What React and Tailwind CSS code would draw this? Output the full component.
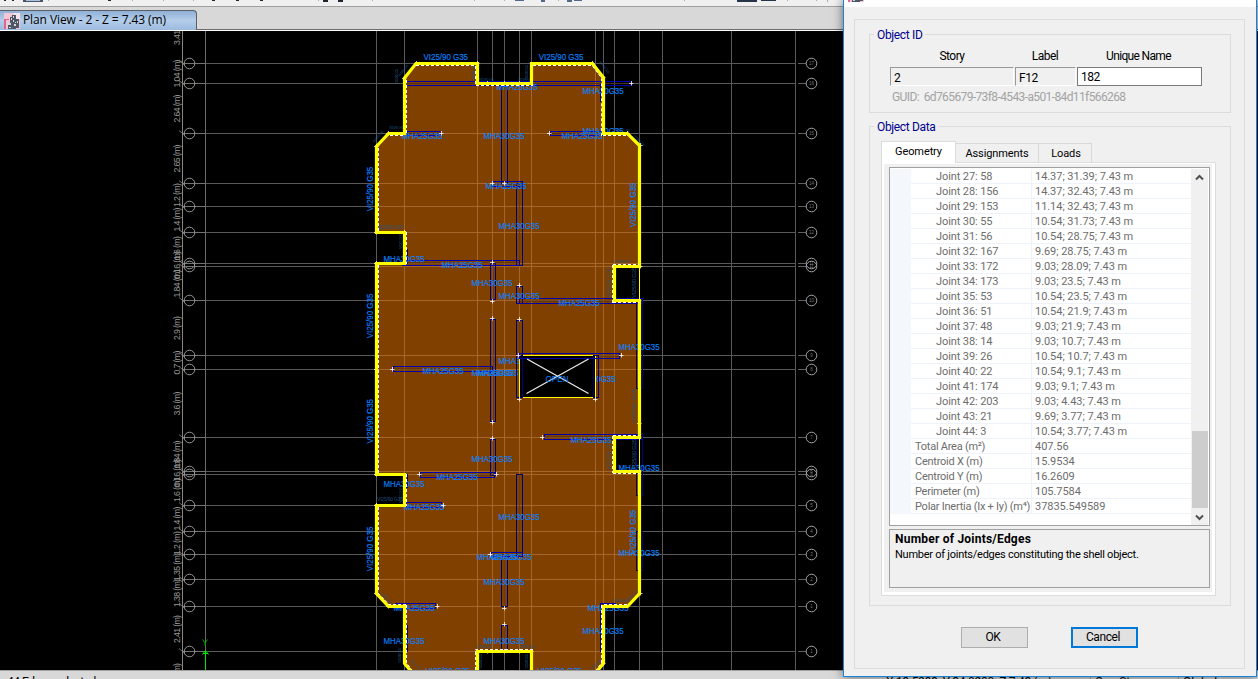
import React from "react";

const rowsY = [63.5, 83.5, 133.5, 183.5, 206.5, 232.5, 263.5, 266.5, 300.5, 355.5, 369.5, 437.5, 471.5, 474.5, 505.5, 531.5, 554.5, 579.5, 606.5, 651.5];
const rowNames = [17, 16, 15, 14, 13, 12, 11, 11, 10, 9, 8, 7, 6, 6, 5, 4, 3, 2, 1, 1];
const colsX = [376.5, 404.5, 477.5, 492.5, 504.5, 519.5, 531.5, 595.5, 603.5, 614.5, 639.5, 662.5, 731.5, 795.5];
const dims = ["1.04", "2.64", "2.65", "1.2", "1.4", "1.6", "0.16", "1.84", "2.9", "0.7", "3.6", "1.84", "0.16", "1.6", "1.4", "1.2", "1.35", "1.38", "2.41"];

const slab =
  "M404.5 78L416 63.5H477.5V83.5H531.5V63.5H592.5L603.5 77.5V133.5H627.5L639.5 145.5V266.5H614.5V300.5H639.5V437.5H614.5V471.5H639.5V593.5L627.5 606.5H603.5V663.5L592 677.5H531.5V651.5H477.5V677.5H416L404.5 663.5V606.5H388.5L376.5 593.5V505.5H404.5V474.5H376.5V263.5H404.5V232.5H376.5V146.5L388.5 133.5H404.5Z";

const dashes =
  "M406.5 80V134M378.5 148V231M416 65.5H476M475.5 66V86M476 85.5H533M533 65.5H592L601.5 78V136M390 135.5H405M603 135.5H627M406.5 232V264M378.5 265V473M406.5 474V506M378.5 507V592M613 264.5H639M612.5 265V303M613 302.5H639M613 435.5H639M612.5 436V473M613 473.5H639M378 593L389 604.5H406M406.5 605V663L412 670M604 604.5H627M601.5 605V663L596 670M475.5 670V649.5H533";

const walls = [
  [404, 81.5, 227, 4], [407, 131.5, 33, 4], [550.5, 131.5, 52, 4], [492.5, 181.5, 30, 5], [402.5, 260.5, 117, 5],
  [519.5, 298.5, 123, 5], [519.5, 353.5, 100, 5], [393.5, 366.5, 99, 5], [544.5, 434.5, 98, 5], [420.5, 472.5, 74, 5],
  [406.5, 502.5, 35, 5], [491.5, 552.5, 31, 4], [395.5, 603.5, 40, 5], [600.5, 603.5, 15, 3],
];
const piers = [
  [501.5, 86.5, 6, 97], [516.5, 183.5, 6, 82], [490.5, 263.5, 5, 36], [516.5, 286.5, 6, 17], [636.5, 298.5, 6, 90],
  [490.5, 319.5, 5, 102], [516.5, 320.5, 6, 77], [593.5, 355.5, 5, 42], [636.5, 434.5, 6, 61], [490.5, 439.5, 5, 36],
  [516.5, 474.5, 6, 82], [501.5, 556.5, 6, 50], [501.5, 625.5, 6, 25], [600.5, 603.5, 5, 48], [636.5, 531.5, 6, 39],
  [403.5, 625.5, 4, 26], [403.5, 249.5, 4, 14], [403.5, 474.5, 4, 13], [600.5, 83.5, 5, 18],
];
const A = "MHA30G35";
const B = "MHA25G35";
const tags = [
  [582.5, 93.8, A], [496.5, 89.5, B], [401.5, 139.3, B], [483.5, 139.3, A], [561.5, 139.3, B], [582.5, 133.5, A], [485.5, 189.3, B],
  [498.5, 229.3, A], [383.5, 262, A], [441.5, 268, B], [471.5, 286, A], [498.5, 299, A], [558.5, 306, B], [618.5, 350, A], [498.5, 364, A],
  [422.5, 374, B], [471.5, 376.3, B], [477.5, 376.3, A], [574.5, 382, A], [570.5, 442.5, B], [471.5, 462.3, A], [436.5, 480, B],
  [383.5, 487, A], [403.5, 510.3, B], [498.5, 520, A], [618.5, 471.3, A], [476.5, 560.3, B], [490.5, 560.3, B], [618.5, 556, A],
  [483.5, 585.3, A], [393.5, 611, B], [587.5, 611, B], [582.5, 634, A], [383.5, 644, A], [483.5, 644, A],
];
const beams = [[423.5, 60.3], [538.8, 60.3], [425.5, 674], [537.5, 674]];
const beamsV = [[373.3, 211.3], [373.3, 338.2], [373.3, 443.5], [373.3, 571.2], [636.3, 227.3], [636.3, 554.3]];
const tiny = [
  [399, 77, -50], [398, 84, -90], [374, 143, -50], [389, 129, 0], [599, 62, 52], [633, 136, 45], [615, 132, 0], [475, 80, -90], [527.5, 80, -90],
  [479, 80.5, 0], [518, 80.5, 0], [615, 263.2, 0], [380, 593, 45], [628, 602, -50], [477, 647.5, 0],
  [520, 647.5, 0], [482, 669, -90], [527.5, 669, -90], [401, 663, -90], [410, 660, 48], [592, 670, -45], [614, 602, 0],
];
const ticks = [
  [376, 146], [388, 133], [404, 78], [416, 63], [477, 63], [592, 63], [603, 77], [627, 133], [640, 145], [487, 83], [504, 83], [519, 83], [441, 133],
  [549, 133], [631, 83], [492, 183], [504, 183], [376, 232], [376, 263], [404, 232], [640, 266], [492, 262], [492, 301], [519, 285], [492, 318],
  [519, 319], [376, 369], [392, 369], [621, 355], [518, 355], [492, 422], [519, 399], [595, 399], [492, 438], [542, 437], [639, 423], [376, 474],
  [376, 505], [419, 474], [496, 474], [443, 505], [490, 554], [504, 608], [504, 624], [437, 606], [376, 593], [388, 606], [640, 593], [603, 663],
  [487, 651], [504, 651], [519, 651], [477, 651], [531, 651],
];

function GridLines() {
  return (
    <g>
      {rowsY.map((y) => <path key={"r" + y} d={`M205 ${y}H796`} />)}
      {colsX.map((x) => <path key={"c" + x} d={`M${x} 31V670`} />)}
    </g>
  );
}

function PlanDrawing() {
  return (
    <svg width="843" height="639" viewBox="0 31 843 639" className="block bg-black" fontFamily="'Liberation Sans', sans-serif">
      <defs>
        <clipPath id="slab"><path d={slab} /></clipPath>
      </defs>
      <g stroke="#595959"><GridLines /></g>
      <path d={slab} fill="#804000" />
      <g clipPath="url(#slab)" stroke="#a4662b"><GridLines /></g>

      <g stroke="#858585" fill="none">
        <path d="M182.5 31V670" />
        <path d="M205.5 31V670" stroke="#6a6a6a" />
        {rowsY.map((y, i) => (
          <g key={y}>
            <path d={`M182 ${y}H205`} stroke="#737373" />
            <path d={`M179 ${y - 3}L185 ${y + 2}`} strokeWidth=".8" />
            <circle cx="189.5" cy={y} r="5.3" stroke="#979797" />
            <path d={`M798 ${y}H806`} stroke="#606060" />
            <circle cx="811.5" cy={y} r="5.3" stroke="#a5a5a5" />
            <text x="811.5" y={y + 1.6} fontSize="4.5" textAnchor="middle" fill="#777" stroke="none">{rowNames[i]}</text>
          </g>
        ))}
      </g>
      <g fill="#989898" fontSize="8.8" textAnchor="middle">
        <text transform="translate(180.3 31) rotate(-90)" textLength="28">3.41 (m)</text>
        {dims.map((d, i) => (
          <text key={i} transform={`translate(180.3 ${(rowsY[i] + rowsY[i + 1]) / 2}) rotate(-90)`} textLength={d.length > 3 ? 28 : 24}>{d + " (m)"}</text>
        ))}
        <text transform="translate(180.3 677) rotate(-90)" textLength="28">2.86 (m)</text>
      </g>

      <g fill="none">
        {piers.map(([x, y, w, h], i) => (
          <g key={i}>
            <rect x={x} y={y} width={w} height={h} stroke="#000078" />
            <path d={`M${x + w / 2} ${y}V${y + h}`} stroke="#4a2a14" strokeWidth=".7" />
          </g>
        ))}
        {walls.map(([x, y, w, h], i) => (
          <g key={i}>
            <path d={`M${x} ${y + h / 2}H${x + w}`} stroke="#4a2a14" strokeWidth=".9" />
            <rect x={x} y={y} width={w} height={h} stroke="#0000a8" />
          </g>
        ))}
      </g>

      <g fill="#0a80fa" stroke="#0a80fa" strokeWidth=".15" fontSize="8.4">
        {tags.map(([x, y, t], i) => <text key={i} x={x} y={y} textLength="41" lengthAdjust="spacingAndGlyphs">{t}</text>)}
        {beams.map(([x, y], i) => <text key={i} x={x} y={y} textLength="44.5" lengthAdjust="spacingAndGlyphs">VI25/90 G35</text>)}
        {beamsV.map(([x, y], i) => <text key={i} transform={`translate(${x} ${y}) rotate(-90)`} textLength="44.5" lengthAdjust="spacingAndGlyphs">VI25/90 G35</text>)}
      </g>
      <g fill="#1f5a94" opacity=".85">
        {tiny.map(([x, y, r], i) => <text key={i} transform={`translate(${x} ${y}) rotate(${r})`} fontSize="3.2" textLength="15">VI25/90 G35</text>)}
        <text x="378" y="229" fontSize="5" textLength="25">VI25/90 G35</text>
        <text x="377" y="501" fontSize="5" textLength="26">VI25/90 G35</text>
        <text transform="translate(401.5 249) rotate(-90)" fontSize="4" textLength="15">VI25/90</text>
        <text transform="translate(401.5 503) rotate(-90)" fontSize="4" textLength="15">VI25/90</text>
        <text transform="translate(635.5 298) rotate(-90)" fontSize="6" textLength="31">VI25/90 G35</text>
        <text transform="translate(635.5 470) rotate(-90)" fontSize="6" textLength="31">VI25/90 G35</text>
        <text transform="translate(635.5 423) rotate(-90)" fontSize="6" textLength="34">VI25/90 G35</text>
        <text transform="translate(610.5 298) rotate(-90)" fontSize="5" textLength="31">VI25/180 G35</text>
        <text transform="translate(610.5 470) rotate(-90)" fontSize="5" textLength="31">VI25/180 G35</text>
      </g>

      <rect x="519.5" y="355.5" width="76" height="42" fill="#000" stroke="#ffff00" />
      <g fill="none" stroke="#000078">
        <rect x="516.5" y="355.5" width="6" height="42" />
        <rect x="593.5" y="355.5" width="5" height="42" />
        <rect x="519.5" y="353.5" width="100" height="5" stroke="#0000a8" />
      </g>
      <path d="M527 359L588.5 393.5M526.5 393.5L588.5 359" stroke="#e6e6e6" strokeWidth="1.4" />
      <text x="545.5" y="382" fontSize="8.4" textLength="23" lengthAdjust="spacingAndGlyphs" fill="#0a80fa">OPEN</text>

      <g stroke="#fff" strokeWidth=".8">
        {ticks.map(([x, y], i) => <path key={i} d={`M${x - 2} ${y + 0.5}h4.500M${x + 0.5} ${y - 2}v4.500`} />)}
      </g>
      <path d={slab} fill="none" stroke="#ffff00" strokeWidth="3.2" />
      <path d="M639.5 266V300M639.5 437V471" stroke="#ffff00" />
      <path d={dashes} fill="none" stroke="#fff" strokeDasharray="3 2" />

      <path d="M205.5 651V670M202.5 654.5L205.5 650.5L208.5 654.5M203 653.5H208" stroke="#00e800" fill="none" />
      <path d="M202.5 639.5L205 643L207.500 639.5M205 643V646" stroke="#00a000" fill="none" />
    </svg>
  );
}

function AppIcon() {
  return (
    <svg width="16" height="16" viewBox="0 0 16 16">
      <rect width="16" height="16" fill="#f3c6d6" />
      <path d="M9 0h7v6h-4z" fill="#f6e4ec" />
      <path d="M0 6h5v1H2v9H0z" fill="#e0648c" />
      <path d="M6 4h3v12H6zM8 2h4v12H8zM12 6h3v9h-3zM4 12h8v4H4z" fill="#4f5767" />
      <path d="M7 5h1v2H7zM9 3h1v2H9zM9 7h1v2H9zM13 8h1v2h-1zM6 10h1v2H6zM10 11h2v2h-2zM3 8h2v4H3zM5 14h2v1H5zM11 9h1v1h-1z" fill="#cfd6e2" />
    </svg>
  );
}

const joints = [
  ["Joint 27: 58", "14.37; 31.39; 7.43 m"], ["Joint 28: 156", "14.37; 32.43; 7.43 m"], ["Joint 29: 153", "11.14; 32.43; 7.43 m"],
  ["Joint 30: 55", "10.54; 31.73; 7.43 m"], ["Joint 31: 56", "10.54; 28.75; 7.43 m"], ["Joint 32: 167", "9.69; 28.75; 7.43 m"],
  ["Joint 33: 172", "9.03; 28.09; 7.43 m"], ["Joint 34: 173", "9.03; 23.5; 7.43 m"], ["Joint 35: 53", "10.54; 23.5; 7.43 m"],
  ["Joint 36: 51", "10.54; 21.9; 7.43 m"], ["Joint 37: 48", "9.03; 21.9; 7.43 m"], ["Joint 38: 14", "9.03; 10.7; 7.43 m"],
  ["Joint 39: 26", "10.54; 10.7; 7.43 m"], ["Joint 40: 22", "10.54; 9.1; 7.43 m"], ["Joint 41: 174", "9.03; 9.1; 7.43 m"],
  ["Joint 42: 203", "9.03; 4.43; 7.43 m"], ["Joint 43: 21", "9.69; 3.77; 7.43 m"], ["Joint 44: 3", "10.54; 3.77; 7.43 m"],
];
const totals = [
  ["Total Area (m²)", "407.56"], ["Centroid X (m)", "15.9534"], ["Centroid Y (m)", "16.2609"], ["Perimeter (m)", "105.7584"],
  ["Polar Inertia (Ix + Iy) (m⁴)", "37835.549589"],
];

function Row({ name, value, indent }) {
  return (
    <div className="flex h-[15px] shrink-0 leading-[16px]">
      <div className={"w-[121px] border-b border-r border-[#eef2fa] " + (indent ? "pl-[25px] tracking-[-0.1px]" : "pl-[4px] tracking-[-0.25px]")}>{name}</div>
      <div className="flex-1 border-b border-[#eef2fa] pl-[3px] tracking-[-0.05px]">{value}</div>
    </div>
  );
}

function Group({ title, className, children }) {
  return (
    <div className={"relative border border-[#dcdcdc] " + className}>
      <span className="absolute -top-[8px] left-[4px] bg-[#f0f0f0] px-[3px] text-[12px] leading-[16px] tracking-[-0.35px] text-[#00008b]">{title}</span>
      {children}
    </div>
  );
}

function Dialog() {
  return (
    <div className="absolute left-[843px] top-0 flex h-[677px] w-[414px] flex-col border-x border-b border-[#1883d7] bg-[#f0f0f0] text-[12px] text-black shadow-[0_0_10px_rgba(0,0,0,0.55)]">
      <div className="h-[7px] shrink-0 overflow-hidden bg-white pl-[4px]"><div className="-mt-[14px]"><AppIcon /></div></div>
      <div className="mx-[10px] mt-[12px] flex h-[650px] w-[391px] flex-col border border-[#dcdcdc] px-[14px] pt-[14px]">
        <Group title="Object ID" className="h-[79px] w-[362px] shrink-0 pl-[20px] pt-[13px]">
          <div className="flex h-[16px] text-center leading-[16px] tracking-[-0.5px]">
            <div className="w-[124px]">Story</div>
            <div className="w-[62px]">Label</div>
            <div className="w-[125px] tracking-[-0.65px]">Unique Name</div>
          </div>
          <div className="mt-[3px] flex h-[19px] gap-px leading-[20px] tracking-[-0.5px]">
            <div className="w-[124px] border border-b-white border-r-white border-l-[#999] border-t-[#999] pl-[3px]">2</div>
            <div className="w-[61px] border border-b-white border-r-white border-l-[#999] border-t-[#999] pl-[3px]">F12</div>
            <div className="w-[125px] border border-[#7a7a7a] bg-white pl-[3px] leading-[18px]">182</div>
          </div>
          <div className="mt-[3px] whitespace-nowrap pl-[2px] leading-[16px] tracking-[-0.61px] text-[#a3a3a3]">GUID:&nbsp; 6d765679-73f8-4543-a501-84d11f566268</div>
        </Group>
        <Group title="Object Data" className="mt-[13px] h-[480px] w-[362px] shrink-0 pl-[11px] pt-[14px]">
          <div className="flex h-[21px] items-end text-[11px]">
            <div className="-mb-px h-[22px] w-[75px] border border-b-0 border-[#dcdcdc] bg-white text-center leading-[20px] tracking-[-0.1px]">Geometry</div>
            <div className="h-[19px] w-[83px] border border-b-0 border-l-0 border-[#d9d9d9] text-center leading-[20px] tracking-[-0.1px]">Assignments</div>
            <div className="h-[19px] w-[53px] border border-b-0 border-l-0 border-[#d9d9d9] pl-[2px] text-center leading-[20px] tracking-[-0.1px]">Loads</div>
          </div>
          <div className="h-[434px] w-[335px] border border-[#dcdcdc] bg-white p-[2px] pt-px">
            <div className="h-[428px] w-[328px] bg-[#f0f0f0] pl-[5px] pt-[3px]">
              <div className="flex h-[359px] w-[321px] border border-[#a0a0a0] bg-white pr-px pt-px text-[11px] text-[#6d6d6d]">
                <div className="h-[345px] w-[21px] bg-[#f4f7fc]" />
                <div className="flex flex-1 flex-col whitespace-nowrap">
                  {joints.map(([n, v]) => <Row key={n} name={n} value={v} indent />)}
                  {totals.map(([n, v]) => <Row key={n} name={n} value={v} />)}
                </div>
                <div className="flex h-[356px] w-[17px] flex-col items-center bg-[#f0f0f0]">
                  <svg width="9" height="7" viewBox="0 0 9 7" className="mt-[5px]"><path d="M1 5.500L4.500 2L8 5.500" fill="none" stroke="#505050" strokeWidth="2" /></svg>
                  <div className="mt-[250px] h-[77px] w-[16px] bg-[#cdcdcd]" />
                  <svg width="9" height="7" viewBox="0 0 9 7" className="mt-[6px]"><path d="M1 1.500L4.500 5L8 1.500" fill="none" stroke="#505050" strokeWidth="2" /></svg>
                </div>
              </div>
              <div className="mt-[3px] h-[59px] w-[321px] border border-[#a0a0a0] pl-[5px] pt-[2px]">
                <div className="text-[12px] font-bold leading-[15px] tracking-[0.22px]">Number of Joints/Edges</div>
                <div className="whitespace-nowrap text-[11px] leading-[15px] tracking-[-0.25px]">Number of joints/edges constituting the shell object.</div>
              </div>
            </div>
          </div>
        </Group>
        <div className="ml-[92px] mt-[21px] flex gap-[43px] tracking-[-0.4px]">
          <button className="h-[21px] w-[67px] border border-[#adadad] bg-[#e1e1e1] pr-[3px] leading-[19px]">OK</button>
          <button className="h-[21px] w-[67px] border-2 border-[#0078d7] bg-[#e1e1e1] pr-[3px] leading-[17px]">Cancel</button>
        </div>
      </div>
    </div>
  );
}

function Toolbar() {
  return (
    <svg width="843" height="6" viewBox="0 0 843 6" className="block bg-[#f0f0f0]">
      <path d="M23 0h20v2H23z" fill="#4a5668" /><path d="M26 0h14v1H26z" fill="#a9c4d8" />
      <path d="M4 0h2v1H4zM12 0h2v1H12zM108 0h3v1H108zM212 0h3v1H212zM236 0h3v1H236zM260 0h3v1H260zM323 0h5v2H323zM338 0h5v2H338z" fill="#1c2430" />
      <path d="M515 0h9v1H515zM541 0h4v2H541zM567 0h5v2H567zM574 0h8v1H574z" fill="#52688a" />
      <path d="M737 0h20v2H737zM761 0h15v1H761z" fill="#26344a" />
      <path d="M48 0h1v1h-1zM132 0h1v1h-1zM163 0h1v1h-1zM193 0h1v1h-1zM318 0h1v1h-1zM372 0h1v1h-1zM474 0h1v1h-1zM504 0h1v1h-1zM558 0h1v1h-1zM684 0h1v1h-1zM787 0h1v1h-1zM816 0h1v1h-1zM827 0h1v2h-1z" fill="#aaa" />
    </svg>
  );
}

export default function App() {
  return (
    <div className="relative flex h-[679px] w-[1258px] flex-col overflow-hidden bg-[#d8d8d8] font-['Roboto',sans-serif]">
      <Toolbar />
      <div className="flex h-[25px] shrink-0 items-end border-b border-t border-b-white border-t-[#a0a0a0]">
        <div className="flex h-[23px] flex-1 items-end border-b border-[#6b6b6b]">
          <div className="-mb-px flex h-[20px] w-[197px] items-center rounded-tr-[4px] border-r border-t border-[#5c6066] bg-gradient-to-b from-[#90b0d6] via-[#b4cdea] to-[#9bbade] pl-[4px]">
            <AppIcon />
            <span className="-mt-[2px] ml-[3px] whitespace-nowrap font-['Open_Sans',sans-serif] text-[12px] leading-[18px] tracking-[-0.1px] text-black">Plan View - 2 - Z = 7.43 (m)</span>
          </div>
        </div>
      </div>
      <div className="flex h-[639px] bg-black"><PlanDrawing /></div>
      <div className="flex h-[9px] items-start border-t border-[#a0a0a0] text-[12px] leading-[14px]">
        <div className="mt-[4px] w-[886px] pl-[7px] tracking-[-0.5px]">44 Edges selected</div>
        <div className="mt-[4px] w-[204px] tracking-[-0.3px]">X 18.5288&nbsp; Y 34.0200&nbsp; Z 7.43 (m)</div>
        <div className="mt-[4px] w-[88px] border-l border-[#999] pl-[4px]">One Story</div>
        <div className="mt-[4px] border-l border-[#999] pl-[4px]">Global</div>
      </div>
      <Dialog />
    </div>
  );
}
